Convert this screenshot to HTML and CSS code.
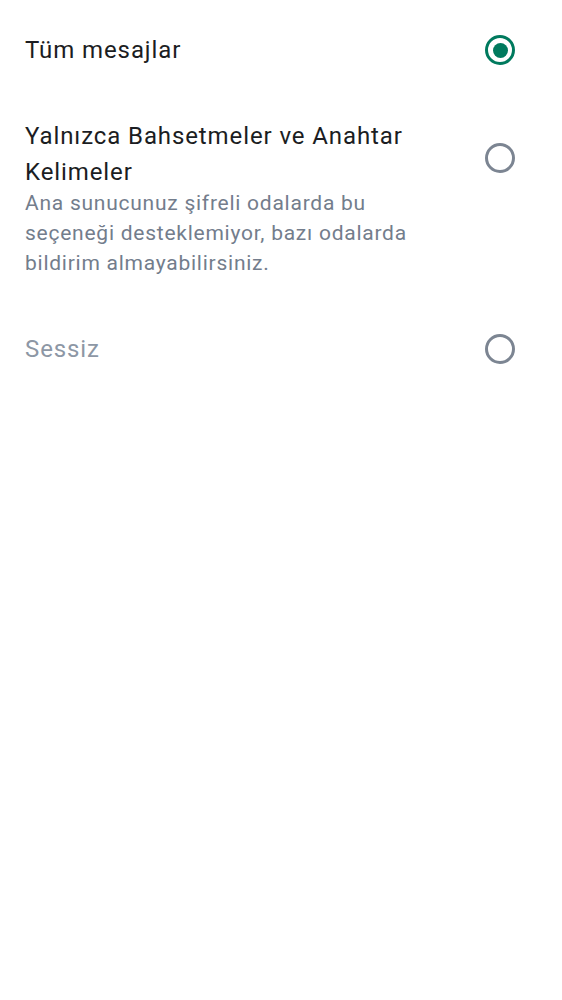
FILE: index.html
```html
<!DOCTYPE html>
<html lang="tr">
<head>
<meta charset="utf-8">
<title>Bildirimler</title>
<link rel="stylesheet" href="styles.css">
</head>
<body>
<div class="list">
  <div class="item">
    <div class="text">
      <div class="title">Tüm mesajlar</div>
    </div>
    <div class="radio radio--on"></div>
  </div>
  <div class="item item--multi">
    <div class="text">
      <div class="title">Yalnızca Bahsetmeler ve Anahtar Kelimeler</div>
      <div class="subtitle">Ana sunucunuz şifreli odalarda bu seçeneği desteklemiyor, bazı odalarda bildirim almayabilirsiniz.</div>
    </div>
    <div class="radio"></div>
  </div>
  <div class="item item--disabled">
    <div class="text">
      <div class="title">Sessiz</div>
    </div>
    <div class="radio"></div>
  </div>
</div>
</body>
</html>
```

FILE: styles.css
```css
html, body {
  margin: 0;
  padding: 0;
  background: #ffffff;
}

body {
  font-family: Roboto, "Noto Sans", "Liberation Sans", sans-serif;
  width: 562px;
  height: 1000px;
}

.list {
  display: flex;
  flex-direction: column;
  padding-top: 7px;
}

.item {
  display: flex;
  align-items: flex-start;
  gap: 44px;
  padding: 25px 47px 25px 25px;
}

.item--multi {
  padding-bottom: 28px;
}

.text {
  flex: 1;
  display: flex;
  flex-direction: column;
  gap: 0;
}

.title {
  font-size: 24px;
  line-height: 36px;
  letter-spacing: 0.9px;
  color: #1b1d22;
}

.subtitle {
  font-size: 21px;
  line-height: 30px;
  letter-spacing: 0.75px;
  margin-top: -2px;
  color: #737d8c;
}

.item--disabled .title {
  color: #8d97a5;
}

.radio {
  flex: none;
  box-sizing: border-box;
  width: 30px;
  height: 30px;
  margin-top: 3px;
  border: 3px solid #7c8592;
  border-radius: 50%;
  display: flex;
  align-items: center;
  justify-content: center;
}

.item--multi .radio {
  margin-top: 25px;
}

.radio--on {
  border-color: #007a5e;
}

.radio--on::after {
  content: "";
  width: 15px;
  height: 15px;
  border-radius: 50%;
  background: #007a5e;
}
```
